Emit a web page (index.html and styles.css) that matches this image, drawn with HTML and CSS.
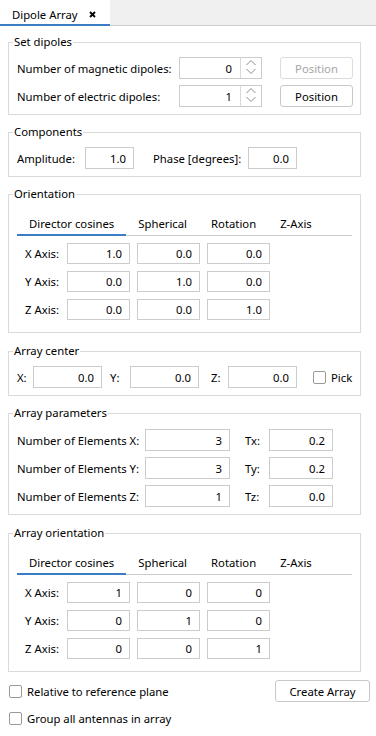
FILE: index.html
```html
<!DOCTYPE html>
<html lang="en">
  <head>
    <meta charset="UTF-8">
    <meta name="viewport" content="width=device-width, initial-scale=1.0">
    <title>Dipole Array</title>
    <link rel="stylesheet" href="styles.css">
  </head>
  <body>
    <div class="tabbar">
      <div class="tab">
        <span>Dipole Array</span>
        <svg class="close" width="7" height="7" viewBox="0 0 7 7"><path d="M1 1L6 6M6 1L1 6" stroke="#000" stroke-width="1.8"/></svg>
      </div>
    </div>

    <div class="panel">
      <!-- Set dipoles -->
      <fieldset class="group">
        <legend>Set dipoles</legend>
        <div class="dipoles">
          <label>Number of magnetic dipoles:</label>
          <span class="spin">
            <input class="num" type="text" value="0">
            <span class="spin-btns">
              <svg width="20" height="20" viewBox="0 0 20 20"><path d="M5.5 7L10 2.5L14.5 7M5.5 11L10 15.5L14.5 11" fill="none" stroke="#8c8c8c" stroke-width="1"/></svg>
            </span>
          </span>
          <button class="btn" disabled>Position</button>

          <label>Number of electric dipoles:</label>
          <span class="spin">
            <input class="num" type="text" value="1">
            <span class="spin-btns">
              <svg width="20" height="20" viewBox="0 0 20 20"><path d="M5.5 7L10 2.5L14.5 7M5.5 11L10 15.5L14.5 11" fill="none" stroke="#8c8c8c" stroke-width="1"/></svg>
            </span>
          </span>
          <button class="btn">Position</button>
        </div>
      </fieldset>

      <!-- Components -->
      <fieldset class="group">
        <legend>Components</legend>
        <div class="line">
          <label class="amp-lbl">Amplitude:</label>
          <input class="num w49" type="text" value="1.0">
          <label class="phase-lbl">Phase [degrees]:</label>
          <input class="num w49" type="text" value="0.0">
        </div>
      </fieldset>

      <!-- Orientation -->
      <fieldset class="group tabbed wide-gap">
        <legend>Orientation</legend>
        <div class="subtabs">
          <span class="subtab active">Director cosines</span>
          <span class="subtab">Spherical</span>
          <span class="subtab">Rotation</span>
          <span class="subtab">Z-Axis</span>
        </div>
        <div class="matrix">
          <label>X Axis:</label>
          <input class="num" type="text" value="1.0">
          <input class="num" type="text" value="0.0">
          <input class="num" type="text" value="0.0">
          <label>Y Axis:</label>
          <input class="num" type="text" value="0.0">
          <input class="num" type="text" value="1.0">
          <input class="num" type="text" value="0.0">
          <label>Z Axis:</label>
          <input class="num" type="text" value="0.0">
          <input class="num" type="text" value="0.0">
          <input class="num" type="text" value="1.0">
        </div>
      </fieldset>

      <!-- Array center -->
      <fieldset class="group">
        <legend>Array center</legend>
        <div class="line center">
          <label>X:</label>
          <input class="num w69" type="text" value="0.0">
          <label class="y-lbl">Y:</label>
          <input class="num w69" type="text" value="0.0">
          <label class="z-lbl">Z:</label>
          <input class="num w69" type="text" value="0.0">
          <span class="check pick"><span class="box"></span>Pick</span>
        </div>
      </fieldset>

      <!-- Array parameters -->
      <fieldset class="group params-group wide-gap">
        <legend>Array parameters</legend>
        <div class="params">
          <label>Number of Elements X:</label>
          <input class="num" type="text" value="3">
          <label class="t-lbl">Tx:</label>
          <input class="num" type="text" value="0.2">
          <label>Number of Elements Y:</label>
          <input class="num" type="text" value="3">
          <label class="t-lbl">Ty:</label>
          <input class="num" type="text" value="0.2">
          <label>Number of Elements Z:</label>
          <input class="num" type="text" value="1">
          <label class="t-lbl">Tz:</label>
          <input class="num" type="text" value="0.0">
        </div>
      </fieldset>

      <!-- Array orientation -->
      <fieldset class="group tabbed last">
        <legend>Array orientation</legend>
        <div class="subtabs">
          <span class="subtab active">Director cosines</span>
          <span class="subtab">Spherical</span>
          <span class="subtab">Rotation</span>
          <span class="subtab">Z-Axis</span>
        </div>
        <div class="matrix">
          <label>X Axis:</label>
          <input class="num" type="text" value="1">
          <input class="num" type="text" value="0">
          <input class="num" type="text" value="0">
          <label>Y Axis:</label>
          <input class="num" type="text" value="0">
          <input class="num" type="text" value="1">
          <input class="num" type="text" value="0">
          <label>Z Axis:</label>
          <input class="num" type="text" value="0">
          <input class="num" type="text" value="0">
          <input class="num" type="text" value="1">
        </div>
      </fieldset>

      <div class="footer">
        <div class="footer-row">
          <span class="check"><span class="box"></span>Relative to reference plane</span>
          <button class="btn create">Create Array</button>
        </div>
        <div class="footer-row second">
          <span class="check"><span class="box"></span>Group all antennas in array</span>
        </div>
      </div>
    </div>
  </body>
</html>
```

FILE: styles.css
```css
body {
  margin: 0;
  background: #fff;
  font-family: "Noto Sans", "Open Sans", sans-serif;
  font-size: 11.3px;
  color: #000;
}

/* --------------- Tab bar ----------------- */

.tabbar {
  height: 26px;
  background: #f0f0f0;
  border-bottom: 1px solid #cfcfcf;
  box-sizing: border-box;
  display: flex;
}

.tab {
  width: 110px;
  height: 26px;
  box-sizing: border-box;
  background: #fff;
  border-bottom: 2px solid #3b7dc4;
  padding: 5px 0 0 12px;
  line-height: 16px;
  display: flex;
  align-items: center;
  align-self: flex-start;
}

.close {
  margin-left: 11px;
  margin-top: -1px;
}

/* --------------- Panel ----------------- */

.panel {
  padding: 8px 6px 0 8px;
}

.group {
  margin: 0 9px 9px 0;
  border: 1px solid #dadada;
  padding: 7px 7px 7px 8px;
}

.group.wide-gap {
  margin-bottom: 10px;
}

.group.last {
  margin-bottom: 8px;
}

.group legend {
  padding: 0 1px;
  margin-left: -4px;
  line-height: 16px;
}

input.num {
  box-sizing: border-box;
  height: 22px;
  border: 1px solid #cccccc;
  border-radius: 0;
  padding: 0 7px 0 2px;
  margin: 0;
  text-align: right;
  font: inherit;
  color: #000;
  background: #fff;
  min-width: 0;
  width: 100%;
}

label {
  white-space: nowrap;
}

.btn {
  box-sizing: border-box;
  height: 22px;
  background: #fff;
  border: 1px solid #c8c8c8;
  border-radius: 3px;
  font: inherit;
  color: #000;
  padding: 0;
}

.btn:disabled {
  color: #a6a6a6;
  border-color: #dcdcdc;
}

/* Set dipoles */
.dipoles {
  display: grid;
  grid-template-columns: 1fr 101px 73px;
  row-gap: 6px;
  align-items: center;
}

.spin {
  display: flex;
  height: 22px;
  box-sizing: border-box;
  border: 1px solid #cccccc;
  width: 83px;
}

.spin input.num {
  border: none;
  height: 20px;
  padding-right: 8px;
  flex: 1;
}

.spin-btns {
  width: 20px;
  border-left: 1px solid #d9d9d9;
  display: flex;
}

/* Components */
.line {
  display: flex;
  align-items: center;
}

.amp-lbl {
  width: 68px;
}

.w49 {
  width: 49px !important;
}

.phase-lbl {
  margin-left: 19px;
  width: 95px;
}

/* Tabs inside groups */
.tabbed {
  padding-top: 6px;
  padding-bottom: 12px;
}

.subtabs {
  display: flex;
  box-shadow: inset 0 -1px 0 #cccccc;
  margin: 0 1px 7px 0;
}

.subtab {
  padding: 8px 12px 2px;
  line-height: 16px;
  border-bottom: 2px solid transparent;
}

.subtab.active {
  border-bottom-color: #3b7dc4;
}

.matrix {
  display: grid;
  grid-template-columns: 43px 63px 63px 63px;
  column-gap: 7px;
  row-gap: 7px;
  align-items: center;
}

.matrix label {
  text-align: right;
  margin-right: 1px;
}

.matrix input.num {
  height: 21px;
}

/* Array center */
.center label {
  width: 16px;
}

.w69 {
  width: 69px !important;
}

.center .y-lbl {
  margin-left: 8px;
  width: 20px;
}

.center .z-lbl {
  margin-left: 12px;
  width: 17px;
}

.check {
  display: flex;
  align-items: center;
  white-space: nowrap;
}

.box {
  width: 13px;
  height: 13px;
  box-sizing: border-box;
  border: 1px solid #9a9a9a;
  border-radius: 2px;
  background: #fff;
  margin-right: 5px;
}

.pick {
  margin-left: 16px;
}

/* Array parameters */
.params-group {
  padding-top: 8px;
}

.params {
  display: grid;
  grid-template-columns: 128px 85px 39px 64px;
  row-gap: 6px;
  align-items: center;
}

.t-lbl {
  padding-left: 15px;
}

/* Footer */
.footer {
  padding-left: 1px;
}

.footer-row {
  display: flex;
  align-items: center;
  justify-content: space-between;
  height: 22px;
}

.footer-row.second {
  margin-top: 5px;
}

.create {
  width: 95px;
}
```
